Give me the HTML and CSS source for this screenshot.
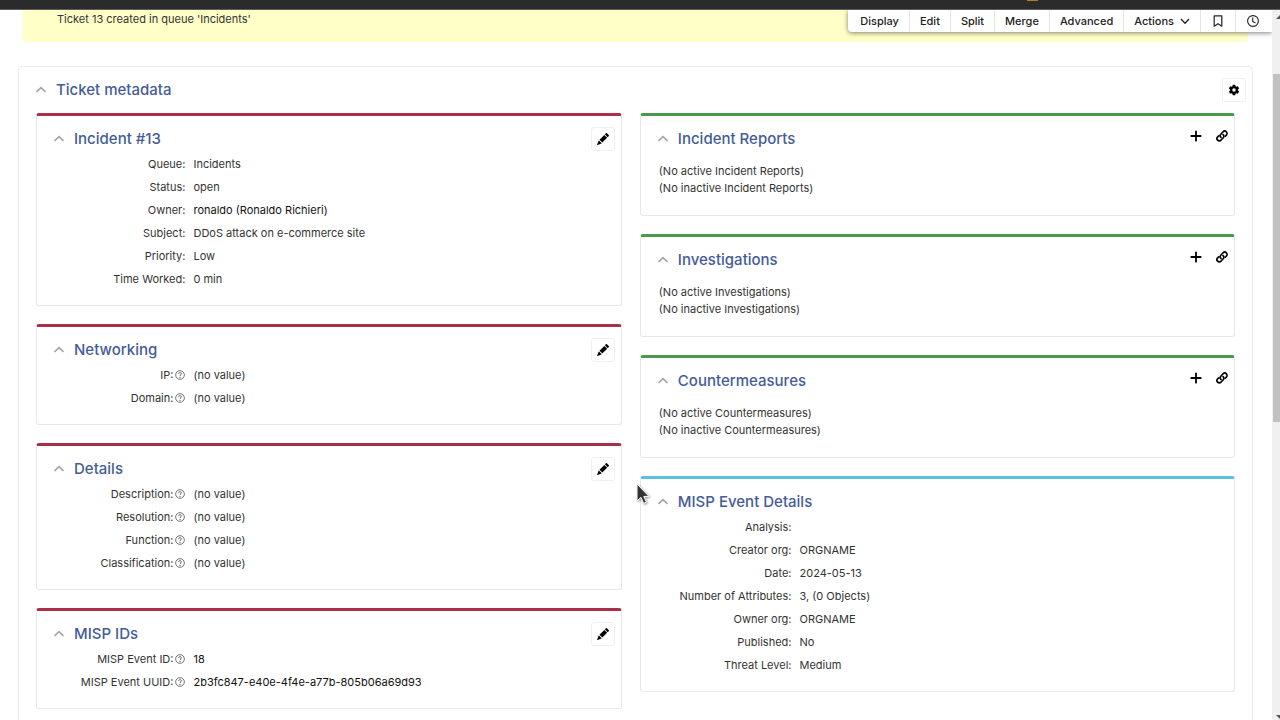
FILE: index.html
```html
<!DOCTYPE html>
<html lang="en">
<head>
    <meta charset="UTF-8">
    <title>#13: DDoS attack on e-commerce site</title>
    <link rel="stylesheet" href="styles.css">
</head>
<body>
    <!-- icons -->
    <svg class="sprite" aria-hidden="true">
        <symbol id="chevron-up" viewBox="0 0 10 10"><path d="M.5 7 5 2.6 9.5 7" fill="none" stroke="currentColor" stroke-width="1.7"/></symbol>
        <symbol id="chevron-down" viewBox="0 0 10 10"><path d="M1 3 5 7.2 9 3" fill="none" stroke="currentColor" stroke-width="1.3"/></symbol>
        <symbol id="pencil" viewBox="0 0 16 16"><path d="M12.9.15a.5.5 0 0 0-.7 0L10.5 1.8l3.7 3.7 1.65-1.65a.5.5 0 0 0 0-.7zM13.5 6.2 9.8 2.5 3.3 9h.2a.5.5 0 0 1 .5.5v.5h.5a.5.5 0 0 1 .5.5v.5h.5a.5.5 0 0 1 .5.5v.5h.5a.5.5 0 0 1 .5.5v.2zM6 13.7a.5.5 0 0 1 0-.2V13h-.5a.5.5 0 0 1-.5-.5V12h-.5a.5.5 0 0 1-.5-.5V11h-.5a.5.5 0 0 1-.5-.5V10h-.5l-.2.1-.1.2-2 5a.5.5 0 0 0 .65.65l5-2 .2-.1z" fill="currentColor"/></symbol>
        <symbol id="plus" viewBox="0 0 12 12"><path d="M6 1.3v9.4M1.3 6h9.4" stroke="currentColor" stroke-width="1.8" stroke-linecap="round"/></symbol>
        <symbol id="link" viewBox="0 0 16 16"><g fill="none" stroke="currentColor" stroke-width="2.2" stroke-linecap="round"><path d="M6.6 9.9A3.1 3.1 0 0 1 6.4 5.6L9.4 2.4A3.1 3.1 0 0 1 13.8 6.8L12.4 8.3"/><path d="M9.4 6.1A3.1 3.1 0 0 1 9.6 10.4L6.6 13.6A3.1 3.1 0 0 1 2.2 9.2L3.6 7.7"/></g></symbol>
        <symbol id="gear" viewBox="0 0 16 16"><path fill="currentColor" fill-rule="evenodd" d="M6.4 1h3.2l.5 2 1.1.65 2-.6 1.6 2.8-1.5 1.45v1.4l1.5 1.45-1.6 2.8-2-.6-1.1.65-.5 2H6.4l-.5-2-1.1-.65-2 .6-1.6-2.8L2.7 8.7V7.3L1.2 5.85l1.6-2.8 2 .6L5.9 3zM8 5.7a2.3 2.3 0 1 0 0 4.6 2.3 2.3 0 0 0 0-4.6z"/></symbol>
        <symbol id="help" viewBox="0 0 12 12"><circle cx="6" cy="6" r="5.2" fill="none" stroke="currentColor"/><path d="M4.3 4.8c0-2.2 3.4-2.1 3.4-.2C7.7 5.8 6 5.8 6 7.2" fill="none" stroke="currentColor" stroke-width="1.1"/><circle cx="6" cy="8.9" r=".75" fill="currentColor"/></symbol>
        <symbol id="bookmark" viewBox="0 0 12 12"><path d="M2.2.8h7.6v10.4L6 8.7l-3.8 2.5z" fill="none" stroke="currentColor" stroke-width="1.2" stroke-linejoin="round"/></symbol>
        <symbol id="clock" viewBox="0 0 12 12"><g fill="none" stroke="currentColor" stroke-width="1.1" stroke-linecap="round"><circle cx="6" cy="6" r="5.4"/><path d="M5.7 2.9v3.5l2.4 1.3"/></g></symbol>
    </svg>

    <div class="window-bar"><span class="window-dot"></span></div>

    <div class="viewport">
        <main class="page">
            <nav class="page-menu">
                <a href="#display">Display</a>
                <a href="#edit">Edit</a>
                <a href="#split">Split</a>
                <a href="#merge">Merge</a>
                <a href="#advanced">Advanced</a>
                <a href="#actions">Actions <svg class="icon-sm"><use href="#chevron-down"/></svg></a>
                <a class="icon-link" href="#bookmark" aria-label="Bookmark"><svg class="icon-md"><use href="#bookmark"/></svg></a>
                <a class="icon-link" href="#timer" aria-label="Timer"><svg class="icon-md"><use href="#clock"/></svg></a>
            </nav>

            <div class="alert">Ticket 13 created in queue 'Incidents'</div>

            <section class="metadata">
                <header class="metadata-head">
                    <button class="toggle" aria-label="Collapse"><svg class="icon-sm"><use href="#chevron-up"/></svg></button>
                    <h1><a href="#metadata">Ticket metadata</a></h1>
                    <button class="tool boxed" aria-label="Settings"><svg class="icon-md"><use href="#gear"/></svg></button>
                </header>

                <div class="columns">
                    <div class="column">
                        <section class="card red">
                            <header class="card-head">
                                <button class="toggle" aria-label="Collapse"><svg class="icon-sm"><use href="#chevron-up"/></svg></button>
                                <h2><a href="#basics">Incident #13</a></h2>
                                <button class="tool boxed" aria-label="Edit"><svg class="icon-md"><use href="#pencil"/></svg></button>
                            </header>
                            <dl class="fields">
                                <dt>Queue:</dt><dd>Incidents</dd>
                                <dt>Status:</dt><dd>open</dd>
                                <dt>Owner:</dt><dd><a href="#ronaldo">ronaldo (Ronaldo Richieri)</a></dd>
                                <dt>Subject:</dt><dd>DDoS attack on e-commerce site</dd>
                                <dt>Priority:</dt><dd>Low</dd>
                                <dt>Time Worked:</dt><dd>0 min</dd>
                            </dl>
                        </section>

                        <section class="card red">
                            <header class="card-head">
                                <button class="toggle" aria-label="Collapse"><svg class="icon-sm"><use href="#chevron-up"/></svg></button>
                                <h2><a href="#networking">Networking</a></h2>
                                <button class="tool boxed" aria-label="Edit"><svg class="icon-md"><use href="#pencil"/></svg></button>
                            </header>
                            <dl class="fields">
                                <dt>IP:<svg class="help"><use href="#help"/></svg></dt><dd>(no value)</dd>
                                <dt>Domain:<svg class="help"><use href="#help"/></svg></dt><dd>(no value)</dd>
                            </dl>
                        </section>

                        <section class="card red">
                            <header class="card-head">
                                <button class="toggle" aria-label="Collapse"><svg class="icon-sm"><use href="#chevron-up"/></svg></button>
                                <h2><a href="#details">Details</a></h2>
                                <button class="tool boxed" aria-label="Edit"><svg class="icon-md"><use href="#pencil"/></svg></button>
                            </header>
                            <dl class="fields">
                                <dt>Description:<svg class="help"><use href="#help"/></svg></dt><dd>(no value)</dd>
                                <dt>Resolution:<svg class="help"><use href="#help"/></svg></dt><dd>(no value)</dd>
                                <dt>Function:<svg class="help"><use href="#help"/></svg></dt><dd>(no value)</dd>
                                <dt>Classification:<svg class="help"><use href="#help"/></svg></dt><dd>(no value)</dd>
                            </dl>
                        </section>

                        <section class="card red">
                            <header class="card-head">
                                <button class="toggle" aria-label="Collapse"><svg class="icon-sm"><use href="#chevron-up"/></svg></button>
                                <h2><a href="#misp-ids">MISP IDs</a></h2>
                                <button class="tool boxed" aria-label="Edit"><svg class="icon-md"><use href="#pencil"/></svg></button>
                            </header>
                            <dl class="fields">
                                <dt>MISP Event ID:<svg class="help"><use href="#help"/></svg></dt><dd><a href="#event">18</a></dd>
                                <dt>MISP Event UUID:<svg class="help"><use href="#help"/></svg></dt><dd><a href="#uuid">2b3fc847-e40e-4f4e-a77b-805b06a69d93</a></dd>
                            </dl>
                        </section>
                    </div>

                    <div class="column">
                        <section class="card green">
                            <header class="card-head">
                                <button class="toggle" aria-label="Collapse"><svg class="icon-sm"><use href="#chevron-up"/></svg></button>
                                <h2><a href="#reports">Incident Reports</a></h2>
                                <div class="tools">
                                    <button class="tool" aria-label="Create"><svg class="icon-md"><use href="#plus"/></svg></button>
                                    <button class="tool" aria-label="Link"><svg class="icon-md"><use href="#link"/></svg></button>
                                </div>
                            </header>
                            <div class="notes">
                                <p>(No active Incident Reports)</p>
                                <p>(No inactive Incident Reports)</p>
                            </div>
                        </section>

                        <section class="card green">
                            <header class="card-head">
                                <button class="toggle" aria-label="Collapse"><svg class="icon-sm"><use href="#chevron-up"/></svg></button>
                                <h2><a href="#investigations">Investigations</a></h2>
                                <div class="tools">
                                    <button class="tool" aria-label="Create"><svg class="icon-md"><use href="#plus"/></svg></button>
                                    <button class="tool" aria-label="Link"><svg class="icon-md"><use href="#link"/></svg></button>
                                </div>
                            </header>
                            <div class="notes">
                                <p>(No active Investigations)</p>
                                <p>(No inactive Investigations)</p>
                            </div>
                        </section>

                        <section class="card green">
                            <header class="card-head">
                                <button class="toggle" aria-label="Collapse"><svg class="icon-sm"><use href="#chevron-up"/></svg></button>
                                <h2><a href="#countermeasures">Countermeasures</a></h2>
                                <div class="tools">
                                    <button class="tool" aria-label="Create"><svg class="icon-md"><use href="#plus"/></svg></button>
                                    <button class="tool" aria-label="Link"><svg class="icon-md"><use href="#link"/></svg></button>
                                </div>
                            </header>
                            <div class="notes">
                                <p>(No active Countermeasures)</p>
                                <p>(No inactive Countermeasures)</p>
                            </div>
                        </section>

                        <section class="card blue">
                            <header class="card-head">
                                <button class="toggle" aria-label="Collapse"><svg class="icon-sm"><use href="#chevron-up"/></svg></button>
                                <h2><a href="#misp-details">MISP Event Details</a></h2>
                            </header>
                            <dl class="fields">
                                <dt>Analysis:</dt><dd></dd>
                                <dt>Creator org:</dt><dd>ORGNAME</dd>
                                <dt>Date:</dt><dd>2024-05-13</dd>
                                <dt>Number of Attributes:</dt><dd>3, (0 Objects)</dd>
                                <dt>Owner org:</dt><dd>ORGNAME</dd>
                                <dt>Published:</dt><dd>No</dd>
                                <dt>Threat Level:</dt><dd>Medium</dd>
                            </dl>
                        </section>
                    </div>
                </div>
            </section>
        </main>

        <div class="scrollbar">
            <span class="arrow up"></span>
            <span class="thumb"></span>
            <span class="arrow down"></span>
        </div>
    </div>

    <!-- mouse pointer -->
    <svg class="pointer" viewBox="0 0 14 22"><path d="M1 1v17l4-3.6 2.6 6 2.8-1.2-2.6-5.8H13z" fill="#333" stroke="#fff"/></svg>
</body>
</html>
```

FILE: styles.css
```css
*{
    box-sizing: border-box;
    margin: 0;
    padding: 0;
}
body{
    display: flex;
    flex-direction: column;
    height: 100vh;
    overflow: hidden;
    background: #fff;
    color: #333;
    font: 11px/18px Inter, "Liberation Sans", sans-serif;
}
a{
    color: inherit;
    text-decoration: none;
}
button{
    border: 0;
    background: none;
    color: inherit;
    cursor: pointer;
}
svg{
    display: block;
}
.sprite{
    position: absolute;
    width: 0;
    height: 0;
}
.icon-sm{
    width: 10px;
    height: 10px;
}
.icon-md{
    width: 12px;
    height: 12px;
}
.window-bar{
    display: flex;
    justify-content: flex-end;
    flex: none;
    height: 10px;
    padding-right: 242px;
    background: #2b2b2b;
    border-bottom: 1px solid #5c5c5c;
}
.window-dot{
    width: 11px;
    height: 1px;
    background: #b87a2c;
}
.viewport{
    display: flex;
    flex: 1;
    min-height: 0;
}
.page{
    position: relative;
    flex: 1;
    min-width: 0;
    padding: 0 19px 0 18px;
    overflow: hidden;
}
/* floating page menu */
.page-menu{
    position: absolute;
    top: 0;
    right: 0;
    display: flex;
    height: 22px;
    background: #fff;
    border-bottom-left-radius: 4px;
    box-shadow: 0 1px 5px rgba(0, 0, 0, .5);
    color: #222;
    font-weight: 500;
}
.page-menu a{
    display: flex;
    align-items: center;
    gap: 6px;
    padding: 0 10px;
    border-left: 1px solid #e4e4e4;
}
.page-menu a:first-child{
    padding-left: 12px;
    border-left: 0;
}
.page-menu .icon-link{
    padding: 0 11px;
}
.page-menu a:last-child{
    padding-right: 13px;
}
.alert{
    height: 32px;
    margin: 0 5px 24px;
    padding: 0 34px;
    background: #ffffc8;
    border-radius: 0 0 3px 3px;
}
.metadata{
    padding: 0 17px 18px;
    border: 1px solid #ebebeb;
    border-radius: 4px;
}
.metadata-head{
    display: flex;
    align-items: center;
    height: 46px;
    margin-right: -11px;
}
h1, h2{
    flex: 1;
    color: #455c99;
    font-size: 15px;
    font-weight: 500;
    line-height: 24px;
}
.toggle{
    width: 20px;
    flex: none;
    color: #a6a6a6;
}
.columns{
    display: grid;
    grid-template-columns: minmax(0, 63fr) minmax(0, 64fr);
    align-items: start;
    gap: 18px;
}
.column{
    display: flex;
    flex-direction: column;
    gap: 18px;
}
.card{
    border: 1px solid #e6e8eb;
    border-top-width: 3px;
    border-radius: 3px;
}
.red{
    border-top-color: #ab2f48;
}
.green{
    border-top-color: #479a4b;
}
.blue{
    border-top-color: #5bc0d8;
}
.card-head{
    display: flex;
    align-items: center;
    height: 36px;
    padding: 10px 6px 0 17px;
}
.tool{
    display: flex;
    align-items: center;
    justify-content: center;
    width: 24px;
    height: 24px;
    color: #000;
}
.boxed{
    border: 1px solid #f0f0f0;
    border-radius: 3px;
}
.tools{
    display: flex;
    gap: 2px;
    height: 30px;
    margin-right: -6px;
}
.fields{
    display: grid;
    grid-template-columns: 24% 1fr;
    grid-auto-rows: 23px;
    column-gap: 8px;
    align-items: center;
    padding: 0 16px 15px;
}
.fields dt{
    display: flex;
    align-items: center;
    justify-content: flex-end;
    gap: 2px;
    white-space: nowrap;
}
.fields a{
    color: #111;
}
.help{
    width: 10px;
    height: 10px;
    color: #555;
}
.notes{
    padding: 11px 18px 18px;
    line-height: 17px;
}
/* scrollbar runs off the right edge */
.scrollbar{
    display: flex;
    flex-direction: column;
    flex: none;
    width: 8px;
    background: #f0f0f0;
    overflow: hidden;
}
.thumb{
    width: 8px;
    height: 49%;
    margin: 55px 0 auto 1px;
    background: #c1c1c1;
}
.arrow{
    flex: none;
    margin-left: 4px;
    border: 4px solid transparent;
}
.up{
    border-top: 0;
    border-bottom-color: #555;
    margin-top: 5px;
}
.down{
    border-bottom: 0;
    border-top-color: #555;
    margin-bottom: 1px;
}
.pointer{
    position: absolute;
    left: 636px;
    top: 483px;
    width: 14px;
    height: 22px;
    filter: drop-shadow(1px 1px 1px rgba(0, 0, 0, .4));
}
```
